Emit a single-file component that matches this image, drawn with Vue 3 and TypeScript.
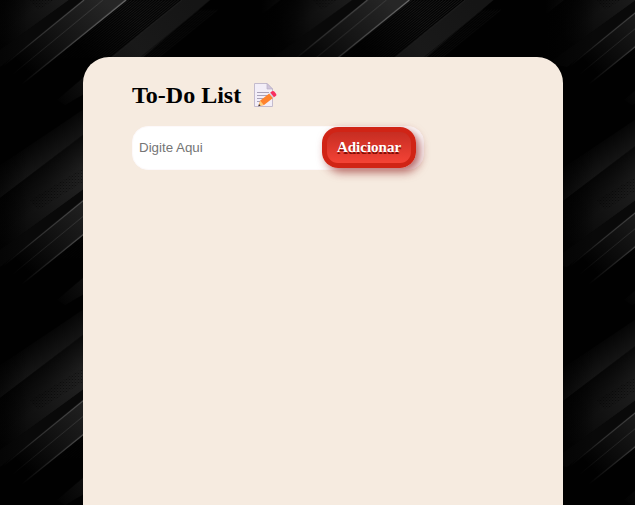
<script setup lang="ts">
import { ref } from 'vue'

const task = ref<string>('')
const tasks = ref<string[]>([])
const stripes: number[] = Array.from({ length: 18 }, (_, i) => 129 + i * 3.1)
const fineStripes: number[] = Array.from({ length: 7 }, (_, i) => 211 + i * 3)

function addTask(): void {
  const value = task.value.trim()
  if (value) tasks.value.push(value)
  task.value = ''
}
</script>

<template>
  <main class="page">
    <svg class="backdrop" aria-hidden="true">
      <defs>
        <linearGradient id="fade" gradientUnits="userSpaceOnUse" x1="105" y1="0" x2="28" y2="72">
          <stop offset="0" stop-color="#262626" />
          <stop offset="0.5" stop-color="#151515" />
          <stop offset="1" stop-color="#010101" />
        </linearGradient>
        <linearGradient id="shade" gradientUnits="userSpaceOnUse" x1="95" y1="-5" x2="0" y2="45">
          <stop offset="0" stop-color="#222" />
          <stop offset="0.5" stop-color="#141414" />
          <stop offset="1" stop-color="#040404" />
        </linearGradient>
        <linearGradient id="upper" gradientUnits="userSpaceOnUse" x1="40" y1="-33" x2="59" y2="-8">
          <stop offset="0" stop-color="#000" stop-opacity=".75" />
          <stop offset="1" stop-color="#000" stop-opacity="0" />
        </linearGradient>
        <linearGradient id="edge" gradientUnits="userSpaceOnUse" x1="126" y1="0" x2="22" y2="84">
          <stop offset="0" stop-color="#777" />
          <stop offset="0.5" stop-color="#484848" />
          <stop offset="1" stop-color="#010101" />
        </linearGradient>
        <linearGradient id="thin" gradientUnits="userSpaceOnUse" x1="84" y1="0" x2="3" y2="66">
          <stop offset="0" stop-color="#505050" />
          <stop offset="0.6" stop-color="#303030" />
          <stop offset="1" stop-color="#010101" />
        </linearGradient>
        <linearGradient id="band" gradientUnits="userSpaceOnUse" x1="25" y1="144" x2="43" y2="168">
          <stop offset="0" stop-color="#020202" />
          <stop offset="1" stop-color="#161616" />
        </linearGradient>
        <linearGradient id="corner" gradientUnits="userSpaceOnUse" x1="90" y1="77" x2="52" y2="100">
          <stop offset="0" stop-color="#111" />
          <stop offset="1" stop-color="#010101" />
        </linearGradient>
        <linearGradient id="stripe" gradientUnits="userSpaceOnUse" x1="130" y1="10" x2="80" y2="48">
          <stop offset="0" stop-color="#1d1d1d" />
          <stop offset="1" stop-color="#030303" />
        </linearGradient>
        <linearGradient id="wide" gradientUnits="userSpaceOnUse" x1="190" y1="0" x2="100" y2="80">
          <stop offset="0" stop-color="#151515" />
          <stop offset="0.6" stop-color="#191919" />
          <stop offset="1" stop-color="#101010" />
        </linearGradient>
        <linearGradient id="side">
          <stop offset="0" stop-color="#010101" />
          <stop offset="0.35" stop-color="#010101" stop-opacity=".6" />
          <stop offset="1" stop-color="#010101" stop-opacity="0" />
        </linearGradient>
        <pattern id="dots" width="3" height="3" patternUnits="userSpaceOnUse">
          <rect width="1" height="1" fill="#000" fill-opacity=".55" />
          <rect x="1.5" y="1.5" width="1" height="1" fill="#000" fill-opacity=".55" />
        </pattern>
        <g id="motif">
          <path d="M83-65L0-2L-22 15V66L0 50L69 0L84-11Z" fill="url(#shade)" />
          <path d="M83-65L0-2L-22 15V66L0 50L69 0L84-11Z" fill="url(#upper)" />
          <path d="M83-32L30 0L38 10L83-18Z" fill="url(#dots)" />
          <path d="M84-11L69 0L0 50L-18 63L0 67L84 0Z" fill="#090909" />
          <path d="M84 0L3 66L22 70L103 0Z" fill="url(#fade)" />
          <path d="M103 0L13 74L22 84L126 0Z" fill="url(#fade)" />
          <path d="M84 0L3 66" stroke="url(#thin)" stroke-width="1" />
          <path d="M103 0L13 74" stroke="url(#thin)" stroke-width=".6" />
          <path d="M126 0L22 84" stroke="url(#edge)" stroke-width="1.1" />
          <path v-for="x in stripes" :key="x" :d="`M${x} 0l-72 58`" stroke="url(#stripe)" stroke-width=".9" />
          <path d="M182 0L111 58H142L210 0Z" fill="url(#wide)" />
          <path d="M182 0L111 58" stroke="#242424" stroke-width=".6" />
          <path v-for="x in fineStripes" :key="x" :d="`M${x - 12} 10l-58 47`" stroke="#0a0a0a" stroke-width=".9" />
          <path d="M84 77L57 100L65 105L84 94Z" fill="url(#corner)" />
          <path d="M84 109L-22 180V215L0 198L84 134Z" fill="url(#band)" />
        </g>
        <pattern id="tile" x="-22" y="-60" width="283.5" height="200" viewBox="-22 -60 283.5 200" patternUnits="userSpaceOnUse">
          <rect x="-22" y="-60" width="284" height="200" fill="#010101" />
          <use href="#motif" y="-200" />
          <use href="#motif" />
          <use href="#motif" y="200" />
          <rect x="-22" y="-60" width="50" height="200" fill="url(#side)" />
        </pattern>
      </defs>
      <rect width="100%" height="100%" fill="url(#tile)" />
    </svg>

    <section class="card">
      <h1 class="title">
        To-Do List
        <svg class="memo" width="24" height="26" viewBox="0 0 24 26" aria-hidden="true">
          <path d="M1.500 1.500H14L19.500 7V24.500H1.500Z" fill="#f3eef8" stroke="#c4bbcd" />
          <path d="M14 1.500V7H19.500Z" fill="#d0c5dc" stroke="#b9afc6" stroke-width=".7" />
          <path d="M4 10.500H16M4 13.500H15M4 16.500H12M4 19.500H9" stroke="#aaa2b8" stroke-width="1" />
          <path d="M5.500 24L7.300 18.500L16.200 11.500L20 16L11 23Z" fill="#ff822d" />
          <path d="M5.500 24L7.200 18.700L10.800 23Z" fill="#ffce7c" />
          <path d="M5.300 24.200L6 22L7.600 23.700Z" fill="#38303e" />
          <path d="M16.200 11.500L17.700 10.300L21.400 14.800L20 16Z" fill="#d3d3e3" />
          <path d="M17.300 10.600L19 9.300Q20.400 8.500 21.500 9.700L23.200 11.900Q23.900 13.200 22.700 14L21 15.200Z" fill="#f92f60" />
        </svg>
      </h1>
      <form class="entry" @submit.prevent="addTask">
        <input v-model="task" class="field" type="text" placeholder="Digite Aqui" />
        <button class="add" type="submit">Adicionar</button>
      </form>
      <ul v-if="tasks.length" class="list">
        <li v-for="(item, i) in tasks" :key="i">{{ item }}</li>
      </ul>
    </section>
  </main>
</template>

<style>
body {
  margin: 0;
  background: #000;
}
</style>

<style scoped>
.page {
  position: relative;
  box-sizing: border-box;
  height: 505px;
  padding: 57px 72px 0 83px;
  overflow: hidden;
  font-family: "Liberation Serif", serif;
}

.backdrop {
  position: absolute;
  inset: 0;
  width: 100%;
  height: 100%;
}

.card {
  position: relative;
  box-sizing: border-box;
  height: 600px;
  padding: 24px 49px;
  border-radius: 26px;
  background: #f6ebe0;
}

.title {
  display: flex;
  align-items: center;
  gap: 12px;
  height: 28px;
  margin: 0 0 17px;
  font-size: 24px;
  line-height: 28px;
  font-weight: bold;
  color: #000;
}

.memo {
  flex: none;
  fill: none;
}

.entry {
  display: flex;
  align-items: flex-start;
  width: 292px;
  height: 44px;
}

.field {
  box-sizing: border-box;
  flex: none;
  width: 292px;
  height: 44px;
  padding: 0 102px 2px 6px;
  border: 1px solid #fdf9fa;
  border-radius: 16px;
  background: #fff;
  font: 13.333px "Liberation Sans", sans-serif;
  color: #222;
  outline: none;
}

.field::placeholder {
  color: #757575;
}

.add {
  box-sizing: border-box;
  flex: none;
  width: 94px;
  height: 41px;
  margin: 1px 0 0 -102px;
  padding: 0;
  border: 5px solid transparent;
  border-radius: 16px;
  background:
    linear-gradient(#c62d22, #f44336) padding-box,
    linear-gradient(#d02416, #d02416) border-box;
  box-shadow: 4px 4px 10px rgba(140, 20, 20, 0.65);
  font: bold 15px "Liberation Serif", serif;
  color: #fff;
  text-shadow: 0 2px 0 #810e05;
}

.list {
  margin: 20px 0 0;
  padding: 0;
  list-style: none;
}
</style>
